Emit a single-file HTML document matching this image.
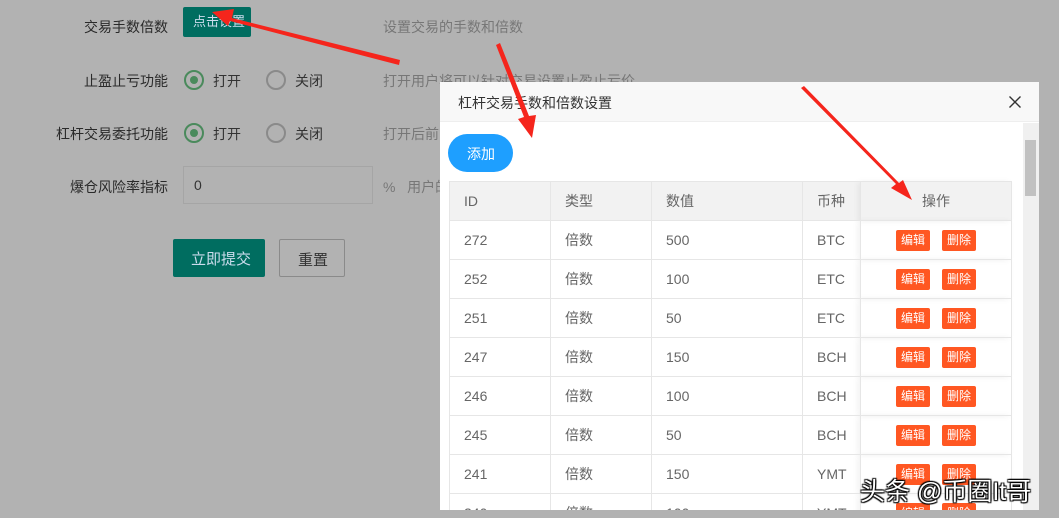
<!DOCTYPE html>
<html><head><meta charset="utf-8"><style>
*{margin:0;padding:0;box-sizing:border-box}
body{width:1059px;height:518px;overflow:hidden;background:#b2b2b2;font-family:"Liberation Sans","Noto Sans CJK SC",sans-serif;font-size:14px;color:#333;position:relative}
.a{position:absolute;white-space:nowrap}
.lbl{color:#2a2a2a;text-align:right;width:168px;left:0}
.hint{color:#777}
.radio{position:absolute;width:20px;height:20px;border-radius:50%;border:2px solid #8a8a8a}
.radio.on{border-color:#4a8a5c}
.radio.on:after{content:"";position:absolute;left:4px;top:4px;width:8px;height:8px;border-radius:50%;background:#4a8a5c}
.modal{position:absolute;left:440px;top:82px;width:599px;height:428px;background:#fff;overflow:hidden}
.mh{height:40px;background:#f8f8f8;border-bottom:1px solid #eee;padding:11px 0 0 18px;font-size:14px;color:#333}
table{position:absolute;left:9px;top:99px;border-collapse:collapse;width:563px;font-size:14px;color:#666}
td{border:1px solid #e6e6e6;height:39px;padding-left:14px}
tr.h td{background:#f2f2f2;height:39px}
.op{text-align:center;padding:0;box-shadow:-3px 0 6px rgba(0,0,0,.06)}
.b{display:inline-block;background:#ff5722;color:#fff;font-size:12px;width:34px;height:21px;line-height:21px;text-align:center;border-radius:2px;margin:0 6px}
</style></head><body>
<div class="a lbl" style="top:17px">交易手数倍数</div>
<div class="a" style="left:183px;top:7px;width:68px;height:30px;background:#006d60;color:#cde;font-size:13px;padding:4px 0 0 10px;border-radius:2px">点击设置</div>
<div class="a hint" style="left:383px;top:17px">设置交易的手数和倍数</div>
<div class="a lbl" style="top:71px">止盈止亏功能</div>
<div class="radio on" style="left:184px;top:70px"></div><div class="a" style="left:213px;top:71px">打开</div>
<div class="radio" style="left:266px;top:70px"></div><div class="a" style="left:295px;top:71px">关闭</div>
<div class="a hint" style="left:383px;top:71px">打开用户将可以针对交易设置止盈止亏价</div>
<div class="a lbl" style="top:124px">杠杆交易委托功能</div>
<div class="radio on" style="left:184px;top:123px"></div><div class="a" style="left:213px;top:124px">打开</div>
<div class="radio" style="left:266px;top:123px"></div><div class="a" style="left:295px;top:124px">关闭</div>
<div class="a hint" style="left:383px;top:124px">打开后前</div>
<div class="a lbl" style="top:177px">爆仓风险率指标</div>
<div class="a" style="left:183px;top:166px;width:190px;height:38px;border:1px solid #a5a5a5;padding:10px 0 0 10px">0</div>
<div class="a hint" style="left:383px;top:177px">%&nbsp;&nbsp; 用户的</div>
<div class="a" style="left:173px;top:239px;width:92px;height:38px;background:#006d60;color:#cde;font-size:15px;padding:9px 0 0 18px;border-radius:2px">立即提交</div>
<div class="a" style="left:279px;top:239px;width:66px;height:38px;border:1px solid #8a8a8a;font-size:15px;padding:9px 0 0 18px;border-radius:2px">重置</div>

<div class="modal">
<div class="mh">杠杆交易手数和倍数设置<svg style="position:absolute;right:18px;top:14px" width="12" height="12"><path d="M0.5 0.5L11.5 11.5M11.5 0.5L0.5 11.5" stroke="#333" stroke-width="1.4"/></svg></div>
<div class="a" style="left:8px;top:52px;width:65px;height:38px;border-radius:19px;background:#1e9fff;color:#fff;padding:10px 0 0 19px">添加</div>
<table>
<tr class="h"><td style="width:101px">ID</td><td style="width:101px">类型</td><td style="width:151px">数值</td><td style="width:58px">币种</td><td class="op">操作</td></tr>
<tr><td>272</td><td>倍数</td><td>500</td><td>BTC</td><td class="op"><span class="b">编辑</span><span class="b">删除</span></td></tr>
<tr><td>252</td><td>倍数</td><td>100</td><td>ETC</td><td class="op"><span class="b">编辑</span><span class="b">删除</span></td></tr>
<tr><td>251</td><td>倍数</td><td>50</td><td>ETC</td><td class="op"><span class="b">编辑</span><span class="b">删除</span></td></tr>
<tr><td>247</td><td>倍数</td><td>150</td><td>BCH</td><td class="op"><span class="b">编辑</span><span class="b">删除</span></td></tr>
<tr><td>246</td><td>倍数</td><td>100</td><td>BCH</td><td class="op"><span class="b">编辑</span><span class="b">删除</span></td></tr>
<tr><td>245</td><td>倍数</td><td>50</td><td>BCH</td><td class="op"><span class="b">编辑</span><span class="b">删除</span></td></tr>
<tr><td>241</td><td>倍数</td><td>150</td><td>YMT</td><td class="op"><span class="b">编辑</span><span class="b">删除</span></td></tr>
<tr><td>240</td><td>倍数</td><td>100</td><td>YMT</td><td class="op"><span class="b">编辑</span><span class="b">删除</span></td></tr>
</table>
<div class="a" style="left:583px;top:41px;width:16px;height:390px;background:#f0f0f0"></div>
<div class="a" style="left:585px;top:58px;width:11px;height:56px;background:#c1c1c1"></div>
</div>
<svg class="a" style="left:0;top:0" width="1059" height="518">
<g fill="#f5251c">
<polygon points="400,60 232,18 234,9 212,12 228,26 230,21 399,65"/>
<polygon points="496,45 524,117 518,119 532,138 536,115 529,116 500,43"/>
<polygon points="801,88 896,184 891,188 912,200 903,180 899,183 804,86"/>
</g>
</svg>
<div class="a" style="left:860px;top:472px;font-size:25px;color:#fff;text-shadow:1px 1px 1px #000,-1px -1px 1px #000,1px -1px 1px #000,-1px 1px 1px #000">头条 @币圈It哥</div>
</body></html>
